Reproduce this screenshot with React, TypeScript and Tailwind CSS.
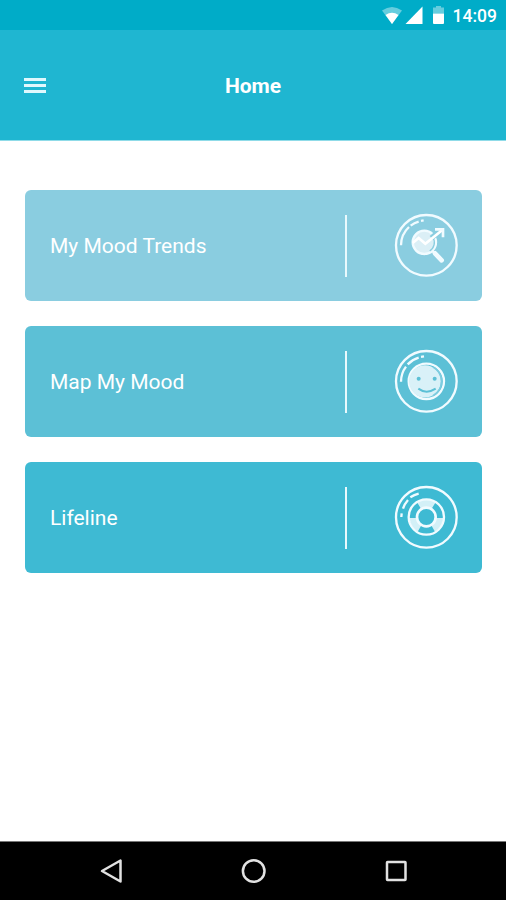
import type { ReactNode } from "react";

function IconRing({ children }: { children: ReactNode }) {
  return (
    <svg viewBox="24 24 192 192" className="w-16 h-16 shrink-0 mb-[2px]" fill="none" stroke="#f1fbff" strokeWidth={7}>
      <circle cx="121" cy="121" r="91" />
      {children}
    </svg>
  );
}

function TrendsIcon() {
  return (
    <IconRing>
      <path d="M45 121A75 75 0 0 1 69 66M74 62A75 75 0 0 1 98 50M105 47.500l8-1.500" />
      <circle cx="115" cy="112" r="35" fill="#dbeff6" />
      <path d="M140 96A30 30 0 0 1 131 138" stroke="#8acde0" strokeWidth={4} />
      <path d="M136 99L158 81" stroke="#8acde0" strokeWidth={16} />
      <path d="M80 114L98 99L118 116L170 74" stroke="#fff" strokeWidth={8} />
      <path d="M147 73h24v24" strokeWidth={8} />
      <path d="M138 137l9 9" />
      <path d="M147 145l20 21" strokeWidth={14} strokeLinecap="round" />
    </IconRing>
  );
}

function SmileIcon() {
  return (
    <IconRing>
      <path d="M45 122A75 75 0 0 1 60 77M65 70A75 75 0 0 1 98 50M105 47.500l9-1.500" />
      <circle cx="121" cy="121" r="53" />
      <circle cx="117" cy="121" r="48" fill="#d9f1f8" stroke="none" />
      <path d="M141 78A49 49 0 0 1 141 164" stroke="#7dccdf" strokeWidth={5} />
      <circle cx="98" cy="113" r="6" fill="#5cc0d6" stroke="none" />
      <circle cx="146" cy="113" r="6" fill="#5cc0d6" stroke="none" />
      <path d="M97 143Q121 161 149 143" stroke="#5cc0d6" strokeWidth={6} />
    </IconRing>
  );
}

function LifelineIcon() {
  return (
    <IconRing>
      <path d="M46 120l1-11M51 95A75 75 0 0 1 66 69M73 61A75 75 0 0 1 98 50" />
      <path d="M93 76A52 52 0 0 1 149 76L135 98A28 28 0 0 0 107 98z" fill="#d3f0f7" stroke="none" />
      <path d="M70 123h24A28 28 0 0 0 107 143L95 164A52 52 0 0 1 70 123z" fill="#d3f0f7" stroke="none" />
      <path d="M172 123h-24A28 28 0 0 1 135 143L147 164A52 52 0 0 0 172 123z" fill="#d3f0f7" stroke="none" />
      <circle cx="121" cy="120" r="53" />
      <circle cx="121" cy="120" r="28" strokeWidth={8} />
    </IconRing>
  );
}

const items = [
  { label: "My Mood Trends", bg: "bg-[#8acde0]", icon: <TrendsIcon /> },
  { label: "Map My Mood", bg: "bg-[#5cc0d6]", icon: <SmileIcon /> },
  { label: "Lifeline", bg: "bg-[#3ebad3]", icon: <LifelineIcon /> },
];

export default function App() {
  return (
    <div className="w-[506px] h-[900px] flex flex-col bg-white font-['Roboto',sans-serif] text-white overflow-hidden">
      {/* status bar */}
      <div className="h-[30px] shrink-0 bg-[#00acc8] flex items-center justify-end pr-[9px] pt-[2px]">
        <svg width="64" height="20" viewBox="382 6 64 20" fill="#fff" className="mr-[7px]">
          <path d="M382 10.500Q392 3.500 402 10.500L392 24z" opacity=".4" />
          <path d="M385.500 15Q392 10.500 398.500 15L392 24z" />
          <path d="M422.500 6.500V24H405.500z" />
          <path d="M436 6h5v1.500h3v6h-11v-6h3z" opacity=".4" />
          <path d="M433 13.500h11v9.500q0 1-1 1h-9q-1 0-1-1z" />
        </svg>
        <span className="text-[17.5px] leading-5 font-medium">14:09</span>
      </div>

      {/* app bar */}
      <header className="h-[111px] shrink-0 bg-[#1fb6d1] border-b border-[#8fdbe8] grid grid-cols-[1fr_auto_1fr] items-center px-6">
        <button aria-label="Menu" className="w-[22px] flex flex-col gap-[3px]">
          <span className="h-[3px] bg-[#e0f8fd]" />
          <span className="h-[3px] bg-[#e0f8fd]" />
          <span className="h-[3px] bg-[#e0f8fd]" />
        </button>
        <h1 className="text-[21px] leading-6 font-bold pt-[2px]">Home</h1>
      </header>

      <main className="flex-1 flex flex-col gap-[25px] pt-[49px] pl-[25px] pr-6">
        {items.map((item) => (
          <button key={item.label} className={`h-[111px] w-full rounded-[6px] flex items-center pl-[25px] pr-6 text-left ${item.bg}`}>
            <span className="flex-1 text-[21px] leading-6 pt-px">{item.label}</span>
            <span className="w-[2px] h-[62px] bg-[#e9f9fd] mr-[47px]" />
            {item.icon}
          </button>
        ))}
      </main>

      {/* system navigation */}
      <nav className="h-[59px] shrink-0 bg-black border-t border-[#777] flex items-center justify-center">
        <svg width="310" height="28" viewBox="98 857 310 28" fill="none" stroke="#e2e2e2" strokeWidth="2.500">
          <path d="M120.500 860.500v21L102 871z" strokeLinejoin="round" />
          <circle cx="253.700" cy="871" r="10.800" />
          <rect x="387" y="862" width="18.500" height="18" rx=".5" />
        </svg>
      </nav>
    </div>
  );
}
